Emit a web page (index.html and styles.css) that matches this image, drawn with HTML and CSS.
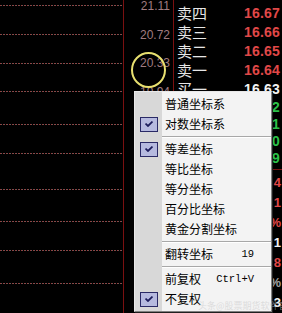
FILE: index.html
```html
<!DOCTYPE html>
<html lang="zh">
<head>
<meta charset="utf-8">
<link rel="stylesheet" href="styles.css">
</head>
<body>
<div class="screen">
  <div class="chart">
    <div class="gl"></div><div class="gl"></div><div class="gl"></div><div class="gl"></div><div class="gl"></div>
    <div class="gl"></div><div class="gl"></div><div class="gl"></div><div class="gl"></div><div class="gl"></div>
  </div>
  <div class="axis">
    <div class="tick">21.11</div>
    <div class="tick">20.72</div>
    <div class="tick">20.33</div>
    <div class="tick">19.94</div>
  </div>
  <div class="book">
    <div class="row"><span class="nm">卖四</span><span class="px up">16.67</span></div>
    <div class="row"><span class="nm">卖三</span><span class="px up">16.66</span></div>
    <div class="row"><span class="nm">卖二</span><span class="px up">16.65</span></div>
    <div class="row"><span class="nm">卖一</span><span class="px up">16.64</span></div>
    <div class="row"><span class="nm">买一</span><span class="px eq">16.63</span></div>
    <div class="row"><span class="px dn shift">16.62</span></div>
    <div class="row"><span class="px dn shift">16.61</span></div>
    <div class="row"><span class="px dn shift">16.60</span></div>
    <div class="row"><span class="px dn shift">16.59</span></div>
    <div class="stats">
      <div class="srow up">4</div>
      <div class="srow up">1</div>
      <div class="srow up">%</div>
      <div class="srow eq">1</div>
      <div class="srow up">8</div>
      <div class="srow gr">%</div>
      <div class="srow eq">3</div>
    </div>
  </div>
</div>

<div class="circle"></div>

<div class="menu">
  <div class="item"><span class="ico"></span><span class="lbl">普通坐标系</span></div>
  <div class="item"><span class="ico"><span class="chk"><svg viewBox="0 0 8 6" width="8" height="6"><path d="M0.5 2.6 L3 5 L7.5 0.6" fill="none" stroke="#1c1c5c" stroke-width="1.8"/></svg></span></span><span class="lbl">对数坐标系</span></div>
  <div class="sep"></div>
  <div class="item"><span class="ico"><span class="chk"><svg viewBox="0 0 8 6" width="8" height="6"><path d="M0.5 2.6 L3 5 L7.5 0.6" fill="none" stroke="#1c1c5c" stroke-width="1.8"/></svg></span></span><span class="lbl">等差坐标</span></div>
  <div class="item"><span class="ico"></span><span class="lbl">等比坐标</span></div>
  <div class="item"><span class="ico"></span><span class="lbl">等分坐标</span></div>
  <div class="item"><span class="ico"></span><span class="lbl">百分比坐标</span></div>
  <div class="item"><span class="ico"></span><span class="lbl">黄金分割坐标</span></div>
  <div class="sep"></div>
  <div class="item"><span class="ico"></span><span class="lbl">翻转坐标</span><span class="key">19</span></div>
  <div class="sep"></div>
  <div class="item"><span class="ico"></span><span class="lbl">前复权</span><span class="key">Ctrl+V</span></div>
  <div class="item"><span class="ico"><span class="chk"><svg viewBox="0 0 8 6" width="8" height="6"><path d="M0.5 2.6 L3 5 L7.5 0.6" fill="none" stroke="#1c1c5c" stroke-width="1.8"/></svg></span></span><span class="lbl">不复权</span></div>
</div>

<div class="watermark">头条@股票期货软件官网</div>
</body>
</html>
```

FILE: styles.css
```css
html, body {
  margin: 0;
  padding: 0;
  background: #000;
}
body {
  width: 282px;
  height: 313px;
  overflow: hidden;
  position: relative;
  font-family: "Liberation Sans", Arial, sans-serif;
}
.screen {
  display: flex;
  height: 313px;
}
.chart {
  width: 123px;
  flex: none;
  border-right: 1px solid #7a1010;
  display: flex;
  flex-direction: column;
}
.gl {
  height: 1px;
  margin-top: 28px;
  background: repeating-linear-gradient(90deg, #9a3a3a 0 1px, #6a5a5a 1px 2px, #000 2px 3px);
}
.gl:nth-child(1) { margin-top: 5px; }
.gl:nth-child(2) { margin-top: 28px; }
.gl:nth-child(3) { margin-top: 28px; }
.gl:nth-child(4) { margin-top: 27px; }
.gl:nth-child(5) { margin-top: 32px; }
.gl:nth-child(6) { margin-top: 28px; }
.gl:nth-child(7) { margin-top: 35px; }
.gl:nth-child(8) { margin-top: 31px; }
.gl:nth-child(9) { margin-top: 28px; }
.gl:nth-child(10) { margin-top: 32px; }

.axis {
  width: 49px;
  flex: none;
  border-right: 1px solid #7a1010;
  display: flex;
  flex-direction: column;
  margin-top: -8px;
}
.tick {
  height: 28.5px;
  line-height: 28.5px;
  text-align: right;
  padding-right: 3px;
  font-size: 12px;
  color: #a07c80;
}

.book {
  flex: 1;
  display: flex;
  flex-direction: column;
  padding-top: 3px;
  overflow: hidden;
}
.row {
  height: 19px;
  display: flex;
  align-items: center;
  padding-left: 3px;
}
.nm {
  font-family: "Noto Sans CJK SC", sans-serif;
  font-size: 15px;
  color: #e6e6e6;
  width: 67px;
  line-height: 19px;
}
.px {
  font-size: 14px;
  font-weight: bold;
  white-space: nowrap;
  letter-spacing: 0.2px;
}
.shift { margin-left: 67px; }
.up { color: #e04848; }
.dn { color: #2cc04a; }
.eq { color: #f2f2f2; }
.gr { color: #a0a0a0; }

.stats {
  margin-top: 3px;
  border-top: 1px solid #7a1414;
  padding-top: 3px;
  display: flex;
  flex-direction: column;
}
.srow {
  height: 20px;
  line-height: 20px;
  text-align: right;
  font-size: 13px;
  font-weight: bold;
  padding-right: 1px;
}

.circle {
  position: absolute;
  left: 131px;
  top: 52px;
  width: 31px;
  height: 32px;
  border: 2px solid #e8e070;
  border-radius: 50%;
}

.menu {
  position: absolute;
  left: 134px;
  top: 91px;
  width: 136px;
  padding: 2px 0 2px 0;
  background: linear-gradient(90deg, #d8d8d8 0 27px, #f3f3f3 27px);
  border-top: 1px solid #e8e8e8;
  border-left: 1px solid #e8e8e8;
  border-right: 1px solid #808080;
  border-bottom: 1px solid #808080;
  box-shadow: 1px 1px 0 #202020;
  font-family: "Noto Sans CJK SC", sans-serif;
  color: #000;
}
.item {
  height: 20px;
  display: flex;
  align-items: center;
}
.ico {
  width: 27px;
  height: 20px;
  flex: none;
  display: flex;
  align-items: center;
  justify-content: center;
}
.chk {
  width: 18px;
  height: 15px;
  box-sizing: border-box;
  background: #b6badf;
  border: 1px solid #2a2a66;
  display: flex;
  align-items: center;
  justify-content: center;
}
.lbl {
  flex: 1;
  padding-left: 3px;
  font-size: 12px;
  line-height: 20px;
}
.key {
  font-family: "Liberation Mono", monospace;
  font-size: 10.5px;
  padding-right: 17px;
}
.sep {
  height: 1px;
  margin: 2px 0 1px 27px;
  background: #a8a8a8;
  border-bottom: 1px solid #ffffff;
}

.watermark {
  position: absolute;
  left: 198px;
  top: 299px;
  font-family: "Noto Sans CJK SC", sans-serif;
  font-size: 9px;
  color: rgba(200, 200, 200, 0.55);
  white-space: nowrap;
}
```
